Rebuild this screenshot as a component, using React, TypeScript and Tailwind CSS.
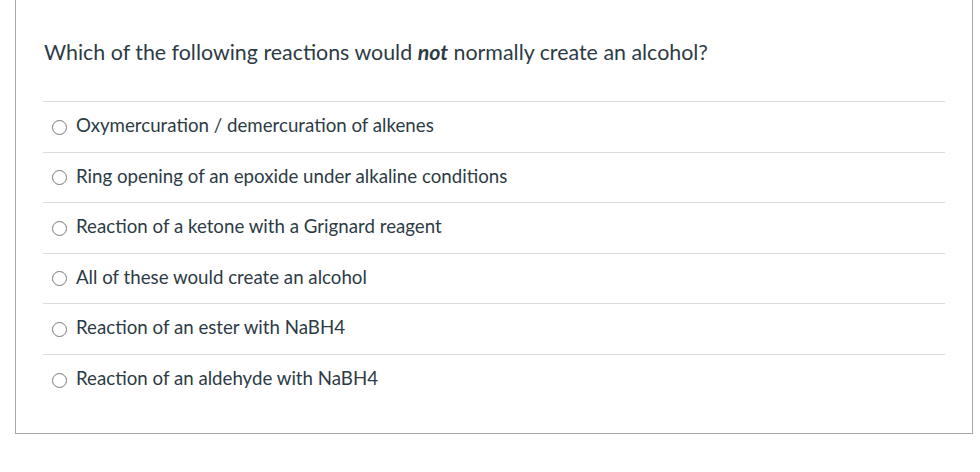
const options = [
  "Oxymercuration / demercuration of alkenes",
  "Ring opening of an epoxide under alkaline conditions",
  "Reaction of a ketone with a Grignard reagent",
  "All of these would create an alcohol",
  "Reaction of an ester with NaBH4",
  "Reaction of an aldehyde with NaBH4",
];

export default function App() {
  return (
    <div className="h-[472px] w-[980px] bg-white pl-[15px] pt-0 font-['Lato','Liberation_Sans',sans-serif] text-[#2d3b45]">
      <div className="w-[958px] border-x border-b border-[#a8a8a8] px-[27px] pb-[28px] pt-[37px]">
        <p className="pl-px text-[21.4px] leading-[30px]">
          Which of the following reactions would <strong className="font-bold italic">not</strong> normally create an
          alcohol?
        </p>
        <ul className="mt-[34px] border-t border-[#dcdcdc]">
          {options.map((label, i) => (
            <li
              key={label}
              className={`flex h-[50.5px] items-center gap-[9px] pl-[9px] ${i < options.length - 1 ? "border-b border-[#dcdcdc]" : ""}`}
            >
              <span className="mt-px size-[15px] shrink-0 rounded-full border border-[#7a7a7a]" />
              <span className="mb-[3px] text-[18.7px]">{label}</span>
            </li>
          ))}
        </ul>
      </div>
    </div>
  );
}
